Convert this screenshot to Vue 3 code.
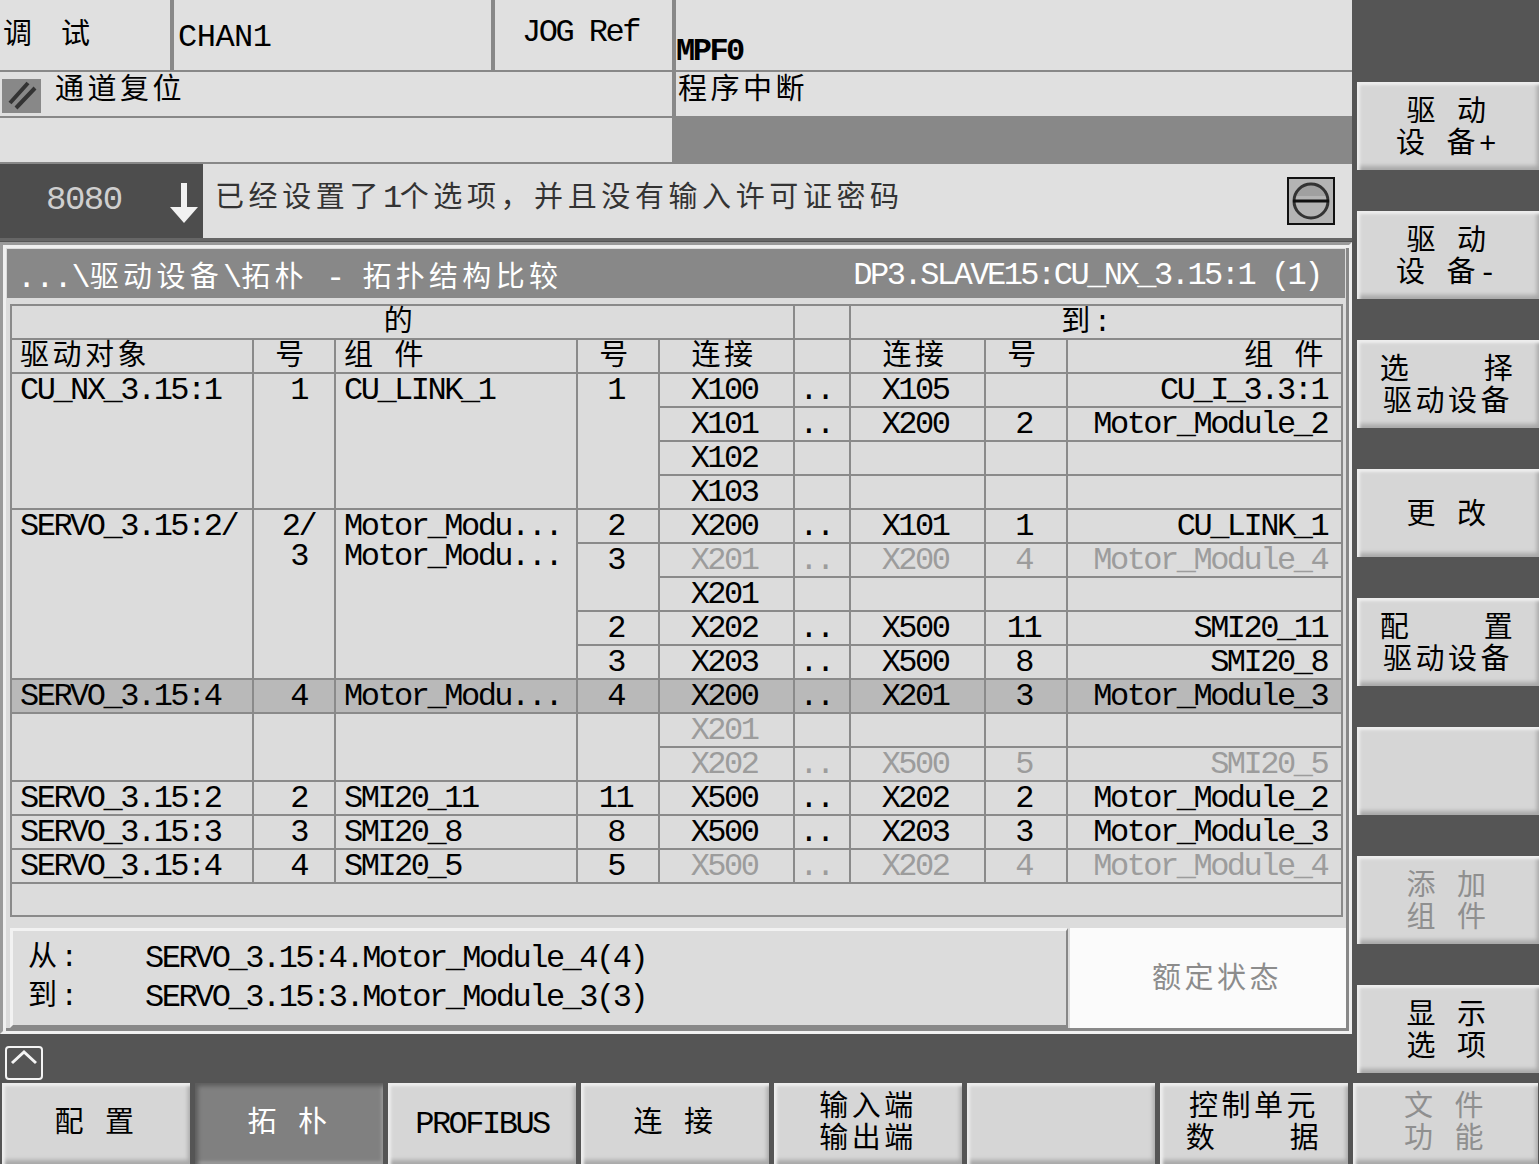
<script setup>
// one row of the topology table, first four columns only where a new group starts
const rows = [
  { a: { t: 'CU_NX_3.15:1', span: 4 }, n: { t: '1', span: 4 }, c: { t: 'CU_LINK_1', span: 4 }, m: { t: '1', span: 4 }, x: 'X100', d: '..', y: 'X105', k: '', r: 'CU_I_3.3:1' },
  { x: 'X101', d: '..', y: 'X200', k: '2', r: 'Motor_Module_2' },
  { x: 'X102', d: '', y: '', k: '', r: '' },
  { x: 'X103', d: '', y: '', k: '', r: '' },
  { a: { t: 'SERVO_3.15:2/', span: 5 }, n: { t: '2/\n3', span: 5 }, c: { t: 'Motor_Modu...\nMotor_Modu...', span: 5 }, m: { t: '2', span: 1 }, x: 'X200', d: '..', y: 'X101', k: '1', r: 'CU_LINK_1' },
  { m: { t: '3', span: 2 }, x: 'X201', d: '..', y: 'X200', k: '4', r: 'Motor_Module_4', off: true },
  { x: 'X201', d: '', y: '', k: '', r: '' },
  { m: { t: '2', span: 1 }, x: 'X202', d: '..', y: 'X500', k: '11', r: 'SMI20_11' },
  { m: { t: '3', span: 1 }, x: 'X203', d: '..', y: 'X500', k: '8', r: 'SMI20_8' },
  { a: { t: 'SERVO_3.15:4', span: 1 }, n: { t: '4', span: 1 }, c: { t: 'Motor_Modu...', span: 1 }, m: { t: '4', span: 1 }, x: 'X200', d: '..', y: 'X201', k: '3', r: 'Motor_Module_3', sel: true },
  { a: { t: '', span: 2 }, n: { t: '', span: 2 }, c: { t: '', span: 2 }, m: { t: '', span: 2 }, x: 'X201', d: '', y: '', k: '', r: '', off: true },
  { x: 'X202', d: '..', y: 'X500', k: '5', r: 'SMI20_5', off: true },
  { a: { t: 'SERVO_3.15:2', span: 1 }, n: { t: '2', span: 1 }, c: { t: 'SMI20_11', span: 1 }, m: { t: '11', span: 1 }, x: 'X500', d: '..', y: 'X202', k: '2', r: 'Motor_Module_2' },
  { a: { t: 'SERVO_3.15:3', span: 1 }, n: { t: '3', span: 1 }, c: { t: 'SMI20_8', span: 1 }, m: { t: '8', span: 1 }, x: 'X500', d: '..', y: 'X203', k: '3', r: 'Motor_Module_3' },
  { a: { t: 'SERVO_3.15:4', span: 1 }, n: { t: '4', span: 1 }, c: { t: 'SMI20_5', span: 1 }, m: { t: '5', span: 1 }, x: 'X500', d: '..', y: 'X202', k: '4', r: 'Motor_Module_4', off: true }
]

const sideKeys = [
  { t: '驱 动\n设 备+' },
  { t: '驱 动\n设 备-' },
  { t: '选    择\n驱动设备' },
  { t: '更 改' },
  { t: '配    置\n驱动设备' },
  { t: '' },
  { t: '添 加\n组 件', off: true },
  { t: '显 示\n选 项' }
]

const bottomKeys = [
  { t: '配 置' },
  { t: '拓 朴', active: true },
  { t: 'PROFIBUS', latin: true },
  { t: '连 接' },
  { t: '输入端\n输出端' },
  { t: '' },
  { t: '控制单元\n数    据' },
  { t: '文 件\n功 能', off: true }
]
</script>

<template>
  <div class="screen">
    <div class="top">
      <div class="left">
        <div class="head">
          <div class="cell cn mode">调 试</div>
          <div class="cell chan">CHAN1</div>
          <div class="cell jog">JOG Ref</div>
          <div class="cell prog">MPF0</div>
          <div class="cell wide status">
            <span class="reset-icon">
              <svg width="39" height="34" viewBox="0 0 39 34">
                <path d="M8 24 L26 4 M14 29 L33 9" stroke="#333" stroke-width="4" fill="none" />
              </svg>
            </span>
            <span class="cn">通道复位</span>
          </div>
          <div class="cell cn state">程序中断</div>
          <div class="cell wide"></div>
        </div>

        <div class="alarm">
          <div class="alarm-num">
            <span class="num">8080</span>
            <svg class="arrow" width="28" height="40" viewBox="0 0 28 40">
              <path d="M11 0 H17 V24 H28 L14 40 L0 24 H11 Z" fill="#f2f2f2" />
            </svg>
          </div>
          <div class="alarm-text">
            <span class="cn dim">已经设置了<span class="lat">1</span>个选项，并且没有输入许可证密码</span>
            <span class="ack">
              <svg width="48" height="48" viewBox="0 0 48 48">
                <rect x="1" y="1" width="46" height="46" fill="#b4b4b4" stroke="#111" stroke-width="2" />
                <path d="M7 19 A17.5 17.5 0 0 1 41 19 Z" fill="#a0a0a0" />
                <circle cx="24" cy="24" r="17" fill="none" stroke="#333" stroke-width="3" />
                <path d="M6 24 H42" stroke="#111" stroke-width="3" />
              </svg>
            </span>
          </div>
        </div>

        <div class="panel">
          <div class="title">
            <span class="cn"><span class="lat">...\</span>驱动设备<span class="lat">\</span>拓朴<span class="lat"> - </span>拓扑结构比较</span>
            <span class="title-right">DP3.SLAVE15:CU_NX_3.15:1 (1)</span>
          </div>

          <table class="grid">
            <colgroup>
              <col style="width: 242px" />
              <col style="width: 82px" />
              <col style="width: 242px" />
              <col style="width: 82px" />
              <col style="width: 135px" />
              <col style="width: 56px" />
              <col style="width: 135px" />
              <col style="width: 82px" />
              <col style="width: 275px" />
            </colgroup>
            <tbody>
              <tr class="headrow">
                <td colspan="5" class="mid cn">的</td>
                <td></td>
                <td colspan="3" class="mid cn to">到:</td>
              </tr>
              <tr class="headrow">
                <td class="cn pad">驱动对象</td>
                <td class="mid cn">号</td>
                <td class="cn pad">组 件</td>
                <td class="mid cn">号</td>
                <td class="mid cn">连接</td>
                <td></td>
                <td class="mid cn">连接</td>
                <td class="mid cn">号</td>
                <td class="end cn">组 件</td>
              </tr>
              <tr v-for="(row, i) in rows" :key="i" :class="{ sel: row.sel }">
                <td v-if="row.a" :rowspan="row.a.span" class="pad group">{{ row.a.t }}</td>
                <td v-if="row.n" :rowspan="row.n.span" class="nr group">{{ row.n.t }}</td>
                <td v-if="row.c" :rowspan="row.c.span" class="pad group">{{ row.c.t }}</td>
                <td v-if="row.m" :rowspan="row.m.span" class="mid group">{{ row.m.t }}</td>
                <td class="mid" :class="{ off: row.off }">{{ row.x }}</td>
                <td class="mid dots" :class="{ off: row.off }">{{ row.d }}</td>
                <td class="mid" :class="{ off: row.off }">{{ row.y }}</td>
                <td class="mid" :class="{ off: row.off }">{{ row.k }}</td>
                <td class="end" :class="{ off: row.off }">{{ row.r }}</td>
              </tr>
              <tr class="last">
                <td colspan="9"></td>
              </tr>
            </tbody>
          </table>

          <div class="info">
            <div class="link">
              <div class="link-row"><span class="cn who">从:</span><span>SERVO_3.15:4.Motor_Module_4(4)</span></div>
              <div class="link-row"><span class="cn who">到:</span><span>SERVO_3.15:3.Motor_Module_3(3)</span></div>
            </div>
            <div class="rated"><span class="cn">额定状态</span></div>
          </div>
        </div>

        <div class="more">
          <svg width="38" height="34" viewBox="0 0 38 34">
            <rect x="1" y="1" width="36" height="32" rx="3" fill="none" stroke="#f4f4f4" stroke-width="2" />
            <path d="M7 17 L19 6 L31 17" fill="none" stroke="#f4f4f4" stroke-width="3" />
          </svg>
        </div>
      </div>

      <div class="side">
        <div v-for="(key, i) in sideKeys" :key="i" class="key cn" :class="{ off: key.off }">{{ key.t }}</div>
      </div>
    </div>

    <div class="bottom">
      <div
        v-for="(key, i) in bottomKeys"
        :key="i"
        class="key"
        :class="{ cn: !key.latin, off: key.off, active: key.active }"
      >{{ key.t }}</div>
    </div>
  </div>
</template>

<style>
html,
body {
  margin: 0;
  background: #555555;
}
</style>

<style scoped>
.screen {
  width: 1539px;
  height: 1164px;
  overflow: hidden;
  background: #555555;
  color: #000;
  font-family: "Liberation Mono", "Noto Sans CJK SC", monospace;
  font-size: 32px;
  letter-spacing: -2.5px;
}

.cn {
  font-size: 29px;
  letter-spacing: 3.5px;
  word-spacing: -3px;
  white-space: pre;
}

.lat {
  font-size: 32px;
  letter-spacing: -2.5px;
  word-spacing: 0;
}

.top {
  display: flex;
  height: 1083px;
}

.left {
  width: 1352px;
  display: flex;
  flex-direction: column;
}

.left > * {
  flex: none;
}

.head {
  display: grid;
  grid-template-columns: 170px 317px 177px 676px;
  grid-template-rows: 70px 44px 44px;
  column-gap: 4px;
  row-gap: 2px;
  padding-bottom: 2px;
  background: #888888;
}

.cell {
  background: #e0e0e0;
  display: flex;
  align-items: center;
}

.wide {
  grid-column: span 3;
}

.mode {
  padding-left: 3px;
  padding-bottom: 8px;
  letter-spacing: 3px;
  word-spacing: 5.6px;
}

.chan {
  padding-left: 4px;
  padding-top: 4px;
  letter-spacing: -0.5px;
}

.jog {
  justify-content: center;
  padding: 0 6px 6px 0;
}

.prog {
  padding-top: 32px;
  font-weight: bold;
}

.status {
  gap: 14px;
  padding-left: 2px;
}

.reset-icon {
  width: 39px;
  height: 34px;
  background: #888888;
  margin-top: 4px;
}

.status .cn {
  margin-bottom: 16px;
}

.state {
  padding-left: 2px;
  padding-bottom: 16px;
}

.alarm {
  display: flex;
  height: 74px;
  border-bottom: 3px solid #666666;
}

.alarm-num {
  width: 203px;
  display: flex;
  align-items: center;
  justify-content: space-between;
  padding: 0 5px 0 46px;
  box-sizing: border-box;
  background: #4d4d4d;
}

.num {
  color: #cfcfcf;
  font-size: 34px;
  letter-spacing: -1.5px;
  margin-top: -2px;
}

.arrow {
  margin-top: 4px;
}

.alarm-text {
  flex: 1;
  display: flex;
  align-items: flex-start;
  justify-content: space-between;
  padding: 9px 17px 0 12px;
  background: #e0e0e0;
}

.dim {
  color: #333333;
  letter-spacing: 4.6px;
}

.ack {
  height: 48px;
  margin-top: 4px;
}

.panel {
  box-sizing: border-box;
  height: 792px;
  margin-top: 1px;
  padding: 4px;
  background: #dcdcdc;
  border: 3px solid;
  border-color: #9a9a9a #f0f0f0 #f0f0f0 #9a9a9a;
  box-shadow: inset 3px 3px 0 #f0f0f0, inset -3px -3px 0 #888888;
}

.title {
  display: flex;
  justify-content: space-between;
  align-items: center;
  box-sizing: border-box;
  height: 49px;
  padding: 3px 24px 0 10px;
  background: #888888;
  color: #fff;
}

.title .cn {
  letter-spacing: 4.3px;
}

.title .lat {
  letter-spacing: -1px;
}

.grid {
  width: 1331px;
  margin: 6px 0 0 3px;
  table-layout: fixed;
  border-collapse: collapse;
  border: 2px solid #8a8a8a;
}

.grid td {
  height: 34px;
  padding: 2px 0 0;
  line-height: 30px;
  border: 2px solid #8a8a8a;
  white-space: pre;
  box-sizing: border-box;
}

.headrow td {
  padding-top: 4px;
  line-height: 28px;
}

.grid .group {
  vertical-align: top;
}

.mid {
  text-align: center;
  padding-right: 5px !important;
}

.pad {
  padding-left: 8px !important;
}

.nr {
  text-align: center;
  padding-left: 9px !important;
}

.end {
  text-align: right;
  padding-right: 14px !important;
}

.to {
  padding-right: 16px !important;
}

.dots {
  padding-right: 12px !important;
  vertical-align: bottom;
}

.off {
  color: #9c9c9c;
}

.sel td {
  background: #b9b9b9;
}

.last td {
  height: 33px;
}

.info {
  display: flex;
  margin: 11px -1px 0 3px;
  height: 100px;
}

.link {
  flex: 1;
  display: flex;
  flex-direction: column;
  justify-content: center;
  gap: 9px;
  padding-left: 15px;
  border-top: 3px solid #f2f2f2;
  border-left: 3px solid #f2f2f2;
  border-right: 2px solid #888888;
  border-bottom: 3px solid #888888;
}

.link-row {
  display: flex;
  line-height: 30px;
}

.who {
  width: 117px;
}

.rated {
  box-sizing: border-box;
  width: 276px;
  display: flex;
  align-items: center;
  justify-content: center;
  margin-left: 2px;
  padding: 0 0 6px 18px;
  background: #fbfbfb;
  color: #8c8c8c;
}

.more {
  padding: 12px 0 0 5px;
}

.side {
  width: 182px;
  margin-left: 5px;
  padding-top: 82px;
  display: flex;
  flex-direction: column;
  gap: 41px;
}

.key {
  flex: none;
  box-sizing: border-box;
  height: 88px;
  padding-top: 7px;
  display: flex;
  align-items: center;
  justify-content: center;
  text-align: center;
  line-height: 32px;
  white-space: pre;
  background: #d6d6d6;
  box-shadow: inset 3px 3px 3px #eeeeee, inset -2px -4px 4px #a8a8a8;
}

.key.off {
  color: #8f8f8f;
}

.bottom {
  display: flex;
  gap: 5px;
  padding-left: 2px;
}

.bottom .key {
  width: 188px;
  height: 81px;
  padding-top: 3px;
  flex: none;
}

.bottom .key:last-child {
  width: 185px;
}

.key.active {
  background: #808080;
  color: #fff;
  box-shadow: inset 3px 3px 4px #5c5c5c, inset -2px -3px 3px #9a9a9a;
}
</style>
